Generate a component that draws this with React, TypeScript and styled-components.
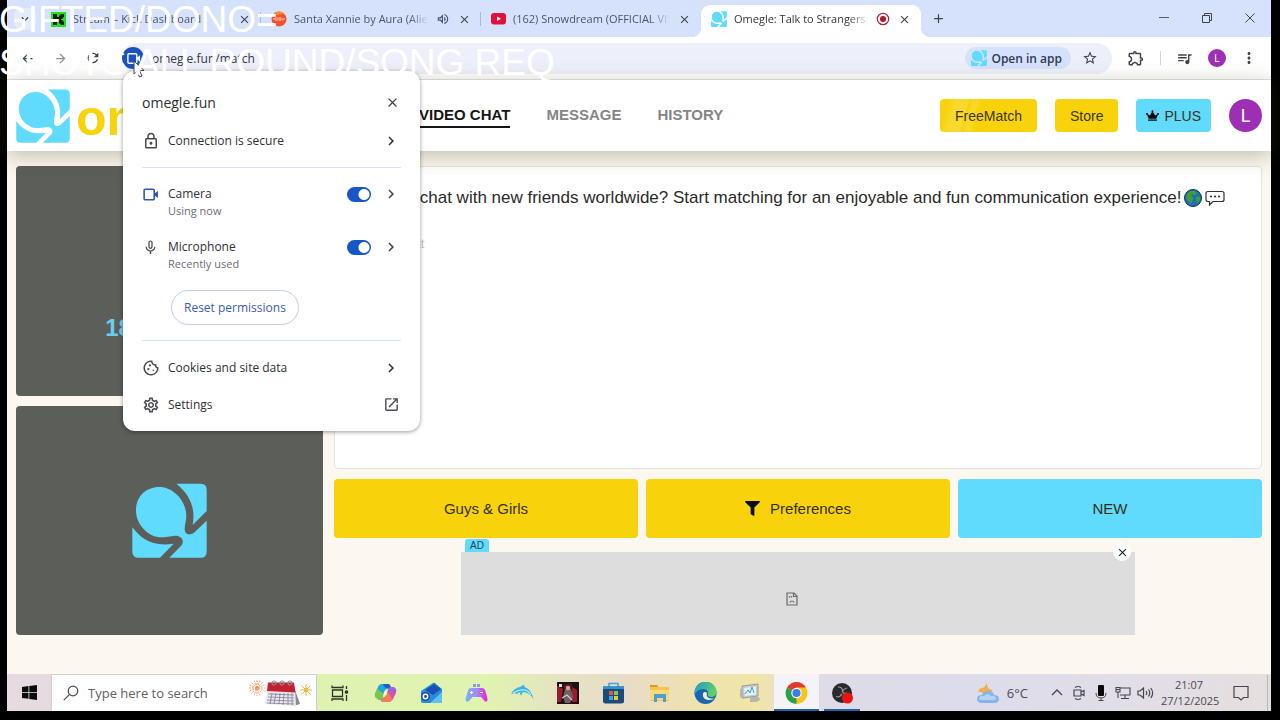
import React from "react";
import styled, { createGlobalStyle, css } from "styled-components";
import {
  MdOutlineLock, MdChevronRight, MdMicNone, MdOutlineCookie, MdOutlineSettings, MdOpenInNew,
  MdStarOutline, MdOutlineExtension, MdQueueMusic, MdMoreVert, MdClose, MdArrowBack, MdArrowForward,
  MdRefresh, MdOutlineVolumeUp, MdKeyboardArrowDown, MdAdd,
} from "react-icons/md";
import { FaCrown, FaFilter } from "react-icons/fa";

const ui = '"Open Sans", "Noto Sans", sans-serif';
const web = '"Liberation Sans", Arial, sans-serif';
const cyan = "#61dbfd";
const yellow = "#f8d30b";

const GlobalStyle = createGlobalStyle`
  *, *::before, *::after { box-sizing: border-box; }
  body { margin: 0; background: #000; }
  button, input { font: inherit; color: inherit; margin: 0; padding: 0; border: 0; background: none; }
  button { cursor: pointer; display: inline-flex; align-items: center; justify-content: center; }
  a { color: inherit; text-decoration: none; }
  svg { display: block; flex: none; }
  h1, h2, p { margin: 0; font: inherit; }
`;

const Stage = styled.div`
  position: relative;
  display: flex;
  min-height: 100vh;
  padding: 0 9px 9px 7px;
  background: #000;
  overflow: hidden;
`;

const Desktop = styled.div`
  flex: 1;
  min-width: 0;
  display: flex;
  flex-direction: column;
  font-family: ${ui};
`;

/* Tab strip */

const TabStrip = styled.div`
  display: flex;
  height: 37px;
  padding-top: 5px;
  background: #d6e2fc;
`;

const TabSearch = styled.button`
  width: 22px;
  height: 22px;
  margin: 3px 5px 0 7px;
  border-radius: 8px;
  background: #e4ecfc;
  color: #2b2f36;
`;

const TabItem = styled.div<{ $active?: boolean; $divider?: boolean }>`
  position: relative;
  flex: 0 1 220px;
  min-width: 0;
  display: flex;
  align-items: center;
  gap: 7px;
  padding: 0 10px 4px 10px;
  font-size: 11px;
  font-weight: 500;
  line-height: 16px;
  color: #4b5468;
  ${(p) => p.$divider && css`
    &::before {
      content: "";
      position: absolute;
      left: -1px;
      top: 7px;
      width: 1px;
      height: 14px;
      background: #a9b9dc;
    }
  `}
  ${(p) => p.$active && css`
    color: #33363c;
    background: #fff;
    border-radius: 9px 9px 0 0;
    &::before, &::after {
      content: "";
      position: absolute;
      bottom: 0;
      width: 9px;
      height: 9px;
    }
    &::before {
      right: 100%;
      background: radial-gradient(circle at 0 0, transparent 9px, #fff 9px);
    }
    &::after {
      left: 100%;
      background: radial-gradient(circle at 100% 0, transparent 9px, #fff 9px);
    }
  `}
`;

const TabTitle = styled.span`
  flex: 1;
  min-width: 0;
  overflow: hidden;
  white-space: nowrap;
  mask-image: linear-gradient(to right, #000 calc(100% - 20px), transparent);
`;

const IconButton = styled.button<{ $size?: number }>`
  width: ${(p) => p.$size ?? 14}px;
  height: ${(p) => p.$size ?? 14}px;
  flex: none;
  color: #3f434a;
`;

const NewTab = styled(IconButton)`
  margin: 6px 0 0 10px;
`;

const WindowControls = styled.div`
  display: flex;
  gap: 29px;
  margin: 6px 14px 0 auto;
`;

/* Toolbar */

const Toolbar = styled.div`
  position: relative;
  display: flex;
  align-items: center;
  gap: 15px;
  height: 43px;
  padding: 0 14px 0 13px;
  background: #fff;
  border-bottom: 1px solid #e4e4e6;
  font-size: 12px;
`;

const NavButtons = styled.div`
  display: flex;
  gap: 19px;
  margin-right: 7px;
`;

const Omnibox = styled.div`
  flex: 1;
  min-width: 0;
  display: flex;
  align-items: center;
  height: 31px;
  padding-right: 15px;
  border-radius: 16px;
  background: #edf0fa;
`;

const SiteChip = styled.button`
  width: 22px;
  height: 22px;
  border-radius: 50%;
  background: #1a53c0;
  color: #fff;
`;

const Address = styled.input`
  flex: 1;
  min-width: 0;
  margin-left: 8px;
  outline: 0;
  color: #33373d;
`;

const OpenInApp = styled.button`
  gap: 4px;
  height: 22px;
  margin-right: 12px;
  padding: 0 9px 0 6px;
  border-radius: 11px;
  background: #d6e2fb;
  font-size: 12px;
  font-weight: 600;
  color: #2c3b58;
`;

const ToolbarDivider = styled.span`
  width: 1px;
  height: 14px;
  background: #c9d5ee;
`;

const Avatar = styled.button<{ $size: number }>`
  width: ${(p) => p.$size}px;
  height: ${(p) => p.$size}px;
  flex: none;
  border-radius: 50%;
  background: #9c2fb3;
  color: #fff;
  font-family: Roboto, sans-serif;
  font-size: ${(p) => (p.$size > 20 ? 18 : 10)}px;
`;

/* Site information popup */

const Popup = styled.section`
  position: absolute;
  z-index: 3;
  top: 34px;
  left: 116px;
  width: 297px;
  padding: 11px 19px 8px;
  border-radius: 12px;
  background: #fff;
  box-shadow: 0 1px 4px rgba(0, 0, 0, 0.4);
  color: #2e3034;
  font-size: 12px;
  font-weight: 500;
`;

const PopupHeader = styled.header`
  display: flex;
  align-items: center;
  justify-content: space-between;
  height: 40px;
  padding-right: 1px;
  font-size: 14px;
`;

const PopupRow = styled.button`
  display: flex;
  width: 100%;
  height: 37px;
  padding-right: 1px;
  text-align: left;
`;

const RowLabel = styled.span`
  flex: 1;
  margin-left: 8px;
`;

const Rule = styled.hr<{ $before: number; $after: number }>`
  height: 1px;
  margin: ${(p) => p.$before}px 0 ${(p) => p.$after}px;
  border: 0;
  background: #d9e2f5;
`;

const Permission = styled.div`
  display: grid;
  grid-template-columns: 18px 1fr 27px 18px;
  column-gap: 8px;
  align-items: center;
  height: 53px;
  padding: 17px 1px 2px 0;
  line-height: 18px;
`;

const PermissionState = styled.span`
  grid-column: 2;
  font-size: 11px;
  font-weight: 400;
  line-height: 16px;
  color: #6b6e74;
`;

const Toggle = styled.input`
  appearance: none;
  width: 24px;
  height: 15px;
  border-radius: 8px;
  background: radial-gradient(circle at 17px 50%, #fff 5px, #1656c5 6px);
`;

const ResetButton = styled.button`
  height: 35px;
  margin: 16px 0 0 29px;
  padding: 0 12px;
  border: 1px solid #c2cdec;
  border-radius: 18px;
  color: #3c5cb6;
`;

const Cursor = styled.svg`
  position: absolute;
  z-index: 4;
  top: 23px;
  left: 126px;
`;

/* Site */

const SiteHeader = styled.header`
  position: relative;
  z-index: 1;
  display: flex;
  align-items: center;
  height: 71px;
  padding: 0 9px;
  background: #fff;
  box-shadow: 0 4px 20px rgba(60, 60, 20, 0.32);
  font-family: ${web};
`;

const Brand = styled.a`
  display: flex;
  align-items: center;
  gap: 6px;
  width: 403px;
  height: 71px;
  overflow: hidden;
`;

const BrandName = styled.span`
  padding-top: 4px;
  color: ${yellow};
  font-size: 50px;
  font-weight: 700;
  line-height: 56px;
`;

const SiteNav = styled.nav`
  display: flex;
  gap: 36px;
  font-size: 15px;
  font-weight: 700;
  line-height: 22px;
`;

const NavLink = styled.a<{ $current?: boolean }>`
  color: ${(p) => (p.$current ? "#161616" : "#858585")};
  border-bottom: 2px solid ${(p) => (p.$current ? "#161616" : "transparent")};
`;

const Actions = styled.div`
  display: flex;
  gap: 18px;
  margin-left: auto;
`;

const ActionButton = styled.button<{ $tone: string; $shine?: boolean }>`
  gap: 5px;
  height: 33px;
  padding: 0 ${(p) => (p.$tone === cyan ? 10 : 15)}px;
  border-radius: 4px;
  background: ${(p) => p.$shine
    ? `linear-gradient(105deg, ${p.$tone} 8%, #fad92e 16%, #fad92e 26%, ${p.$tone} 29%, #f9d829 32%, #f9d829 36%, ${p.$tone} 39%)`
    : p.$tone};
  font-size: 14px;
  color: #3b3514;
`;

const Main = styled.main`
  flex: 1;
  display: grid;
  grid-template-columns: minmax(0, 307fr) minmax(0, 928fr);
  gap: 11px;
  padding: 15px 9px 39px;
  background: #fcf7ef;
  font-family: ${web};
`;

const Videos = styled.div`
  display: grid;
  grid-template-rows: 1fr 1fr;
  gap: 10px;
`;

const VideoPanel = styled.div`
  display: flex;
  align-items: center;
  justify-content: center;
  min-height: 160px;
  border-radius: 4px;
  background: #5c5e5a;
`;

const AgeNote = styled.p`
  margin-top: 94px;
  font-size: 24px;
  font-weight: 700;
  line-height: 28px;
  color: #68cdf2;
`;

const Conversation = styled.div`
  display: flex;
  flex-direction: column;
`;

const ChatLog = styled.div`
  flex: 1;
  padding: 20px 12px;
  border: 1px solid #e2e2e2;
  border-radius: 4px;
  background: #fff;
`;

const Welcome = styled.p`
  display: flex;
  align-items: center;
  gap: 3px;
  font-size: 17px;
  line-height: 22px;
  white-space: nowrap;
  color: #2a2a2a;
`;

const Hint = styled.p`
  margin-top: 26px;
  font-size: 13px;
  line-height: 18px;
  color: #c4c4c4;
`;

const Controls = styled.div`
  display: grid;
  grid-template-columns: repeat(3, 1fr);
  gap: 8px;
  margin-top: 10px;
`;

const ControlButton = styled.button<{ $tone: string }>`
  gap: 10px;
  height: 59px;
  border-radius: 4px;
  background: ${(p) => p.$tone};
  font-size: 15px;
  color: #33300f;
`;

const AdSlot = styled.aside`
  position: relative;
  display: flex;
  align-items: center;
  justify-content: center;
  align-self: center;
  width: 674px;
  max-width: 100%;
  height: 83px;
  margin-top: 14px;
  padding: 10px 12px 0 0;
  background: #dddddd;
`;

const AdTag = styled.span`
  position: absolute;
  left: 4px;
  bottom: 100%;
  width: 24px;
  border-radius: 3px 3px 0 0;
  background: ${cyan};
  font-size: 10px;
  line-height: 13px;
  text-align: center;
  color: #1e4652;
`;

const AdClose = styled.button`
  position: absolute;
  top: -9px;
  right: 4px;
  width: 18px;
  height: 18px;
  border-radius: 50%;
  background: #fff;
  color: #222;
`;

/* Taskbar */

const Taskbar = styled.footer`
  display: flex;
  height: 37px;
  background: linear-gradient(90deg, #e6dbe0 0, #e6dbe0 44px, #dff2b2 310px, #e0f3b0 480px, #e6e2c4 560px, #e8dcc8 620px, #efe2b0 690px, #f0e6a6 750px, #dfdbe6 800px, #dddcec 950px, #e3dee6 1150px, #e6dede 100%);
`;

const StartButton = styled.button`
  width: 44px;
`;

const SearchBox = styled.label`
  display: flex;
  align-items: center;
  gap: 9px;
  width: 266px;
  padding: 0 2px 0 11px;
  border: 1px solid #cfcfcf;
  border-bottom: 0;
  background: #fff;
  color: #5b5b5b;
  font-size: 13px;
`;

const SearchInput = styled.input`
  flex: 1;
  min-width: 0;
  outline: 0;
  &::placeholder { color: #5f5f5f; opacity: 1; }
`;

const Apps = styled.div`
  display: grid;
  grid-template-columns: repeat(12, 1fr);
  width: 548px;
`;

const AppButton = styled.button<{ $state?: "open" | "focused" }>`
  height: 37px;
  background: ${(p) => (p.$state === "focused" ? "#f5f3f7" : "none")};
  ${(p) => p.$state && css`
    background-image: linear-gradient(#1f63ad, #1f63ad);
    background-repeat: no-repeat;
    background-position: center bottom;
    background-size: ${p.$state === "focused" ? "100%" : "36px"} 2px;
  `}
`;

const Tray = styled.div`
  display: flex;
  align-items: center;
  margin-left: auto;
  padding-right: 3px;
  color: #4a4a50;
`;

const Weather = styled.button`
  gap: 7px;
  margin-right: 20px;
  font-size: 13px;
`;

const TrayIcons = styled.div`
  display: flex;
  align-items: center;
  gap: 6px;
`;

const Clock = styled.time`
  width: 56px;
  margin: 0 16px 0 7px;
  font-size: 11px;
  line-height: 16px;
  text-align: center;
  white-space: nowrap;
`;

const ShowDesktop = styled.button`
  width: 1px;
  height: 36px;
  margin-left: 18px;
  background: #bdb8b8;
`;

const Caption = styled.div`
  position: absolute;
  z-index: 5;
  top: -2px;
  left: -1px;
  pointer-events: none;
  font-family: ${web};
  font-size: 37px;
  line-height: 43px;
  white-space: pre;
  color: #fff;
`;

function BrandMark({ size }: { size: number }) {
  return (
    <svg width={size} height={size} viewBox="0 0 225 225" fill={cyan} aria-hidden="true">
      <path d="M12 83C12 40 42 12 82 12C125 12 163 55 163 98C163 112 158 125 158 138C158 150 165 156 176 154Q181 153 186 149L224 113V206Q224 224 206 224H112L149 187C158 172 148 158 130 158C115 160 100 163 88 163C50 163 12 125 12 83Z" />
      <path d="M133 2H206Q224 2 224 20V84L182 126C190 80 178 38 133 2Z" />
      <path d="M1 133C28 168 60 192 125 182L84 224H20Q1 224 1 206Z" />
    </svg>
  );
}

function CameraGlyph({ size }: { size: number }) {
  return (
    <svg width={size} height={size} viewBox="0 0 16 16" aria-hidden="true">
      <rect x="2" y="3" width="9.5" height="10" rx="1" fill="none" stroke="currentColor" strokeWidth="1.5" />
      <path d="M11.5 7.2L15 4.6V11.4L11.5 8.8Z" fill="currentColor" />
    </svg>
  );
}

function KickIcon() {
  return (
    <svg width="15" height="15" viewBox="0 0 15 15" aria-hidden="true">
      <rect width="15" height="15" fill="#1ee31b" />
      <path d="M2 2H6V5H8V3.5H9.5V2H13V5.5H11.5V7H10V8H11.500V9.500H13V13H9.500V11.500H8V10H6V13H2Z" fill="#0a1a08" />
    </svg>
  );
}

function SunoIcon() {
  return (
    <svg width="16" height="16" viewBox="0 0 16 16" aria-hidden="true">
      <circle cx="8" cy="8" r="7.500" fill="#f4512c" />
      <path d="M1 6A7.500 7.500 0 0 1 14 3.500Q8 2 1 6Z" fill="#f98b2d" />
      <path d="M3 9V7M5 10V6M7 9.500V6.500M9 10V6M11 9.500V7M13 9V7" stroke="#ffd9c4" strokeWidth="1" />
    </svg>
  );
}

function YouTubeIcon() {
  return (
    <svg width="15" height="12" viewBox="0 0 15 12" aria-hidden="true">
      <rect width="15" height="11.500" rx="3" fill="#e3103b" />
      <path d="M6 3.500L10 5.800L6 8Z" fill="#fff" />
    </svg>
  );
}

function RecordIcon() {
  return (
    <svg width="14" height="14" viewBox="0 0 14 14" aria-hidden="true">
      <circle cx="7" cy="7" r="5.700" fill="none" stroke="#b3243a" strokeWidth="1.200" />
      <circle cx="7" cy="7" r="3" fill="#b3142c" />
    </svg>
  );
}

function GlobeEmoji() {
  return (
    <svg width="18" height="18" viewBox="0 0 18 18" role="img" aria-label="globe">
      <circle cx="9" cy="9" r="8.500" fill="#1d6fb8" stroke="#15304a" />
      <path d="M5 2.500L11 1.500L13 4L11.500 6L8.500 5.500L7 7L9.500 8.500L9 11L6.500 15L4.500 12L2 9.500L3 5Z" fill="#3f9b3c" />
      <path d="M12 8L16 7.500L16 11L13.500 14L12 12Z" fill="#3f9b3c" />
    </svg>
  );
}

function SpeechEmoji() {
  return (
    <svg width="20" height="18" viewBox="0 0 20 18" role="img" aria-label="speech balloon">
      <path d="M3 2.500H17Q19 2.500 19 4.500V10.500Q19 12.500 17 12.500H8L4.500 16V12.500H3Q1 12.500 1 10.500V4.500Q1 2.500 3 2.500Z" fill="#fff" stroke="#333" strokeWidth="1.200" />
      <circle cx="6" cy="7.500" r="1.100" fill="#333" />
      <circle cx="10" cy="7.500" r="1.100" fill="#333" />
      <circle cx="14" cy="7.500" r="1.100" fill="#333" />
    </svg>
  );
}

function BrokenFileIcon() {
  return (
    <svg width="12" height="14" viewBox="0 0 12 14" fill="none" stroke="#6a6a6a" strokeWidth="1.200" aria-hidden="true">
      <path d="M1 1H8L11 4V13H1Z" />
      <path d="M7.500 1V4.500H11M3.500 4V5.500M5.500 4V5.500M3.800 10.500Q6 7.500 8.200 10.500" />
    </svg>
  );
}

function CalendarArt() {
  return (
    <svg width="66" height="28" viewBox="0 0 66 28" aria-hidden="true">
      <g stroke="#f0844a" strokeWidth="0.800" strokeDasharray="2 1">
        <path d="M9 1V17M1 9H17M3.500 3.500L14.500 14.500M14.500 3.500L3.500 14.500M6 1.500L12 16.500M12 1.500L6 16.500M1.500 6L16.500 12M1.500 12L16.500 6" />
      </g>
      <g stroke="#f2b53c" strokeWidth="1">
        <path d="M58 5V17M52 11H64M53.500 6.500L62.500 15.500M62.500 6.500L53.500 15.500" />
        <circle cx="58" cy="11" r="1.500" fill="#f2b53c" />
      </g>
      <path d="M46 8L52 25L45 27Z" fill="#8d8890" />
      <path d="M20 9H47L48 27L17 25Z" fill="#e9e7ef" />
      <path d="M20 3.500H46L47.500 13.500L19 12Z" fill="#c4202e" />
      <path d="M20 15L46 16M20 18L46 19M19 21L46 22M19 24L46 25M24 14L22 25M28 14L26 25M32 14L31 25M36 14L35 26M40 14L40 26M44 14L44 26" stroke="#77748a" strokeWidth="0.700" />
      <g fill="none" stroke="#8a8a92" strokeWidth="1.200">
        <circle cx="26" cy="4" r="2" /><circle cx="34" cy="4" r="2" /><circle cx="42" cy="4" r="2" />
      </g>
    </svg>
  );
}

const taskIcons: { name: string; state?: "open" | "focused"; art: React.ReactNode }[] = [
  {
    name: "Task view",
    art: (
      <g fill="none" stroke="#2e3526" strokeWidth="1.300">
        <path d="M4 3.500V5.500H15V3.500M4.500 8H14.500V14.500H4.500ZM4 19V17H15V19M18.500 4V7M18.500 13V19" />
        <circle cx="18.500" cy="10" r="1.200" fill="#2e3526" />
      </g>
    ),
  },
  {
    name: "Copilot",
    art: (
      <>
        <path d="M8 2H14Q16 2 16.500 4L17.500 7H13Q11 7 10 10L8 17Q7 19 4.500 17.500Q0 15 1 12L4 5Q5 2 8 2Z" fill="#1fa7d8" />
        <path d="M1 12L3 7L9 11L8 17Q7 18 5 17.500Q0 16 1 12Z" fill="#7cc648" />
        <path d="M9 2H14Q16 2 17 6H12Q9 4 9 2Z" fill="#2257c9" />
        <path d="M14 20H9Q7 20 7 18L8 16Q11 16 12 13L14.500 6Q19 4 21 6Q23 8 22 11L19 17Q17.500 20 14 20Z" fill="#d654a8" />
        <path d="M8 16Q11 16 12 13L13 10Q17 13 18 18Q16 20 14 20H9Q7 20 8 16Z" fill="#f77d52" />
        <path d="M15 6Q19 4 21 6Q23 8 22 10H14Z" fill="#9a63d8" />
        <path d="M10 10.500L13.500 9L12.500 13L9.500 14Z" fill="#f0f6d8" />
      </>
    ),
  },
  {
    name: "Camera",
    art: (
      <>
        <path d="M1 9L13 1Q15 0 16 2L22 7V19Q22 21 20 21H3Q1 21 1 19Z" fill="#2a8bdc" />
        <path d="M5 8L14 2L21 7L13 13Z" fill="#1b53b4" />
        <path d="M10 21L22 10V19Q22 21 20 21Z" fill="#5fc0f5" />
        <circle cx="5.500" cy="14.500" r="4.500" fill="#1d4fa8" />
        <circle cx="5.500" cy="14.500" r="2.200" fill="none" stroke="#fff" strokeWidth="1.500" />
      </>
    ),
  },
  {
    name: "Game controller",
    art: (
      <>
        <defs>
          <linearGradient id="pad"><stop offset="0" stopColor="#74b4f0" /><stop offset="0.500" stopColor="#a98af0" /><stop offset="1" stopColor="#e61fd8" /></linearGradient>
        </defs>
        <path d="M6 6H17Q20 6 21 11L22.500 17Q22.500 21 19.500 19L16 15H7.500L4 19Q.5 21 .5 17L2.500 10Q3.500 6 6 6Z" fill="url(#pad)" />
        <path d="M8 2H11V5H8ZM12 2H15V5H12ZM10 6H13V9H10Z" fill="#8f96ef" />
        <path d="M5 10.500H8M6.500 9V12M15 10.500H18" stroke="#fff" strokeWidth="1.100" />
      </>
    ),
  },
  {
    name: "Dolphin",
    art: (
      <>
        <path d="M0 12Q3 6 9 5L13 2.500L13.500 5Q20 7 22.500 17Q18 10 12 10Q7 10 6 12Q4 10.500 0 12Z" fill="#37b5e6" />
        <path d="M2 11Q8 7 14 8Q18 9 20 13" fill="none" stroke="#b6ecf5" strokeWidth="1.200" />
        <path d="M12 10L10 13.500L8.500 10.500Z" fill="#37b5e6" />
      </>
    ),
  },
  {
    name: "Game",
    art: (
      <>
        <rect y="0" width="22" height="22" fill="#1c1216" />
        <path d="M0 4L6 7L4 20H0ZM15 5L20 8V20H15Z" fill="#9d1c2c" />
        <path d="M6 3L15 2L14 8H8Z" fill="#5e1b22" />
        <path d="M8 7H14L16 15L13 21H8L6 15Z" fill="#6f6163" />
        <circle cx="11" cy="6" r="2.200" fill="#d2a495" />
        <path d="M5 16L10 13L15 18" stroke="#d6c7c7" strokeWidth="1.200" fill="none" />
        <rect x="2" y="2" width="3" height="3" fill="#dcdcdc" />
      </>
    ),
  },
  {
    name: "Store",
    art: (
      <>
        <path d="M7 5V1.500H16V5" fill="none" stroke="#3ea6e0" strokeWidth="1.600" />
        <path d="M1 4.500H22V19Q22 21.500 19.500 21.500H3.500Q1 21.500 1 19Z" fill="#1d4a7c" />
        <path d="M1 4.500H22V7H1Z" fill="#2f93d3" />
        <path d="M7 9H11V13H7Z" fill="#e8553a" /><path d="M12 9H16V13H12Z" fill="#8cc63f" />
        <path d="M7 14H11V18H7Z" fill="#35a9e8" /><path d="M12 14H16V18H12Z" fill="#fbc12e" />
      </>
    ),
  },
  {
    name: "File Explorer",
    art: (
      <>
        <path d="M2 3H9L11 5H21V19H2Z" fill="#f5c64f" />
        <path d="M2 3H9L10 5H2Z" fill="#d99a22" />
        <path d="M2 8H21V18H2Z" fill="#fcd978" />
        <path d="M6 12H18V20H15V16H9V20H6Z" fill="#4f9dd2" />
      </>
    ),
  },
  {
    name: "Edge",
    art: (
      <>
        <defs>
          <linearGradient id="edge" x1="0" y1="0" x2="1" y2="0.400"><stop offset="0" stopColor="#1f93d6" /><stop offset="1" stopColor="#5fd267" /></linearGradient>
        </defs>
        <circle cx="11.500" cy="11" r="11" fill="#1767ae" />
        <path d="M.5 11A11 11 0 0 1 22.500 10Q22.500 15 17 15Q13 15 14 12Q14.500 7 9 7Q3 7 .5 13Z" fill="url(#edge)" />
        <path d="M9 11Q8 17 14 18Q18 18.500 21 16Q16 17.500 13.500 15Q12 13.500 13 11.500Q12 9 9 11Z" fill="#f3ecd0" />
      </>
    ),
  },
  {
    name: "System monitor",
    art: (
      <>
        <path d="M3 4L19 2V14L4 16Z" fill="#c9c9c9" stroke="#8c8c8c" strokeWidth="0.800" />
        <path d="M5 6L17 4.500V12.500L6 14Z" fill="#e2f4f8" />
        <path d="M6 12L9 8L11 11L13 5L15 11" fill="none" stroke="#3fa3bb" />
        <path d="M11 15H20L21 18L17 20H11ZM1 7L4 6V17L1 15Z" fill="#b9b4ac" />
      </>
    ),
  },
  {
    name: "Chrome",
    state: "focused",
    art: (
      <>
        <path d="M11.500 11L2 5.500A11 11 0 0 1 21 5.500Z" fill="#df3b2f" />
        <path d="M11.500 11L2 5.500A11 11 0 0 0 11.500 22L15 13Z" fill="#2ca14c" />
        <path d="M11.500 11L11.500 22A11 11 0 0 0 21 5.500H11.500Z" fill="#f9c518" />
        <circle cx="11.500" cy="11" r="5.200" fill="#fff" />
        <circle cx="11.500" cy="11" r="4.100" fill="#3b7de9" />
      </>
    ),
  },
  {
    name: "OBS Studio",
    state: "open",
    art: (
      <>
        <circle cx="11" cy="11" r="10" fill="#2a2a2e" />
        <path d="M7 5Q12 5 11.500 9.500Q12 12 16 11M5 14.500Q9 16 11 11.500M16 6Q12 7 11.500 10" fill="none" stroke="#97979b" strokeWidth="1.200" />
        <circle cx="16.500" cy="16" r="5.500" fill="#ee1111" />
      </>
    ),
  },
];

const tabs = [
  { title: "Stream – Kick Dashboard", icon: <KickIcon /> },
  { title: "Santa Xannie by Aura (Alien", icon: <SunoIcon />, status: <MdOutlineVolumeUp size={14} /> },
  { title: "(162) Snowdream (OFFICIAL VIS", icon: <YouTubeIcon /> },
  { title: "Omegle: Talk to Strangers w", icon: <BrandMark size={16} />, status: <RecordIcon />, active: true },
];

function BrowserTabs() {
  return (
    <TabStrip>
      <TabSearch aria-label="Search tabs"><MdKeyboardArrowDown size={14} /></TabSearch>
      {tabs.map((tab, i) => (
        <TabItem key={tab.title} $active={tab.active} $divider={i === 1 || i === 2}>
          {tab.icon}
          <TabTitle>{tab.title}</TabTitle>
          {tab.status}
          <IconButton aria-label="Close tab"><MdClose size={13} /></IconButton>
        </TabItem>
      ))}
      <NewTab aria-label="New tab"><MdAdd size={15} /></NewTab>
      <WindowControls>
        <IconButton aria-label="Minimise">
          <svg width="10" height="10" viewBox="0 0 10 10"><path d="M0 4.500H10" stroke="#555c6b" /></svg>
        </IconButton>
        <IconButton aria-label="Restore">
          <svg width="10" height="10" viewBox="0 0 10 10" fill="none" stroke="#3f434a"><path d="M.5 2.500H7.500V9.500H.5ZM2.500 2.500V.5H9.500V7.500H7.500" /></svg>
        </IconButton>
        <IconButton aria-label="Close window">
          <svg width="10" height="10" viewBox="0 0 10 10" stroke="#3f434a"><path d="M.5 .5L9.500 9.500M9.500 .5L.5 9.500" /></svg>
        </IconButton>
      </WindowControls>
    </TabStrip>
  );
}

function PermissionRow({ icon, id, label, state }: { icon: React.ReactNode; id: string; label: string; state: string }) {
  return (
    <Permission>
      {icon}
      <label htmlFor={id}>{label}</label>
      <Toggle id={id} type="checkbox" role="switch" defaultChecked />
      <IconButton aria-label={`${label} details`} $size={18}><MdChevronRight size={18} /></IconButton>
      <PermissionState>{state}</PermissionState>
    </Permission>
  );
}

function SiteInfo() {
  return (
    <Popup aria-label="Site information">
      <PopupHeader>
        <h2>omegle.fun</h2>
        <IconButton aria-label="Close" $size={16}><MdClose size={15} /></IconButton>
      </PopupHeader>
      <PopupRow>
        <MdOutlineLock size={18} color="#484b50" />
        <RowLabel>Connection is secure</RowLabel>
        <MdChevronRight size={18} />
      </PopupRow>
      <Rule $before={8} $after={0} />
      <PermissionRow id="camera" label="Camera" state="Using now" icon={<CameraIcon />} />
      <PermissionRow id="microphone" label="Microphone" state="Recently used" icon={<MdMicNone size={17} color="#484b50" />} />
      <ResetButton>Reset permissions</ResetButton>
      <Rule $before={15} $after={8} />
      <PopupRow>
        <MdOutlineCookie size={18} color="#484b50" />
        <RowLabel>Cookies and site data</RowLabel>
        <MdChevronRight size={18} />
      </PopupRow>
      <PopupRow>
        <MdOutlineSettings size={18} color="#484b50" />
        <RowLabel>Settings</RowLabel>
        <MdOpenInNew size={17} color="#484b50" />
      </PopupRow>
    </Popup>
  );
}

const CameraTint = styled.span`
  color: #2f55b8;
`;

function CameraIcon() {
  return <CameraTint><CameraGlyph size={17} /></CameraTint>;
}

function BrowserToolbar() {
  return (
    <Toolbar>
      <NavButtons>
        <IconButton aria-label="Back"><MdArrowBack size={15} /></IconButton>
        <IconButton aria-label="Forward"><MdArrowForward size={15} color="#8d9095" /></IconButton>
        <IconButton aria-label="Reload"><MdRefresh size={16} /></IconButton>
      </NavButtons>
      <Omnibox>
        <SiteChip aria-label="View site information"><CameraGlyph size={15} /></SiteChip>
        <Address aria-label="Address" defaultValue="omegle.fun/match" />
        <OpenInApp><BrandMark size={16} />Open in app</OpenInApp>
        <IconButton aria-label="Bookmark"><MdStarOutline size={16} /></IconButton>
      </Omnibox>
      <IconButton aria-label="Extensions" $size={18}><MdOutlineExtension size={18} /></IconButton>
      <ToolbarDivider />
      <IconButton aria-label="Media" $size={17}><MdQueueMusic size={17} /></IconButton>
      <Avatar $size={18} aria-label="Profile">L</Avatar>
      <IconButton aria-label="Menu" $size={16}><MdMoreVert size={18} /></IconButton>
      <SiteInfo />
      <Cursor width="12" height="18" viewBox="0 0 12 18" aria-hidden="true">
        <path d="M1 1V14L4 11.500L6.500 17L9 16L6.500 10.500H11Z" fill="#fff" stroke="#444" strokeWidth="1" />
      </Cursor>
    </Toolbar>
  );
}

function Site() {
  return (
    <>
      <SiteHeader>
        <Brand href="#"><BrandMark size={54} /><BrandName>omegle</BrandName></Brand>
        <SiteNav>
          <NavLink href="#" $current>VIDEO CHAT</NavLink>
          <NavLink href="#">MESSAGE</NavLink>
          <NavLink href="#">HISTORY</NavLink>
        </SiteNav>
        <Actions>
          <ActionButton $tone={yellow} $shine>FreeMatch</ActionButton>
          <ActionButton $tone={yellow}>Store</ActionButton>
          <ActionButton $tone={cyan}><FaCrown size={13} color="#0c0c0c" />PLUS</ActionButton>
          <Avatar $size={33} aria-label="Account">L</Avatar>
        </Actions>
      </SiteHeader>
      <Main>
        <Videos>
          <VideoPanel><AgeNote>18+ Rooms</AgeNote></VideoPanel>
          <VideoPanel><BrandMark size={75} /></VideoPanel>
        </Videos>
        <Conversation>
          <ChatLog>
            <Welcome>
              Ready to chat with new friends worldwide? Start matching for an enjoyable and fun communication experience!
              <GlobeEmoji /><SpeechEmoji />
            </Welcome>
            <Hint>Start the chat</Hint>
          </ChatLog>
          <Controls>
            <ControlButton $tone={yellow}>Guys &amp; Girls</ControlButton>
            <ControlButton $tone={yellow}><FaFilter size={15} color="#0c0c0c" />Preferences</ControlButton>
            <ControlButton $tone={cyan}>NEW</ControlButton>
          </Controls>
          <AdSlot>
            <AdTag>AD</AdTag>
            <BrokenFileIcon />
            <AdClose aria-label="Close ad"><MdClose size={13} /></AdClose>
          </AdSlot>
        </Conversation>
      </Main>
    </>
  );
}

function WindowsTaskbar() {
  return (
    <Taskbar>
      <StartButton aria-label="Start">
        <svg width="15" height="15" viewBox="0 0 15 15" fill="#0c0c0c"><path d="M0 2L6.500 1.100V7H0ZM7.300 1L15 0V7H7.300ZM0 7.800H6.500V13.800L0 12.900ZM7.300 7.800H15V15L7.300 13.900Z" /></svg>
      </StartButton>
      <SearchBox>
        <svg width="16" height="16" viewBox="0 0 16 16" fill="none" stroke="#4c4c4c" strokeWidth="1.200"><circle cx="10" cy="6" r="4.800" /><path d="M6.600 9.400L.8 15.200" /></svg>
        <SearchInput aria-label="Search" placeholder="Type here to search" />
        <CalendarArt />
      </SearchBox>
      <Apps>
        {taskIcons.map((app) => (
          <AppButton key={app.name} $state={app.state} aria-label={app.name}>
            <svg width="23" height="22" viewBox="0 0 23 22">{app.art}</svg>
          </AppButton>
        ))}
      </Apps>
      <Tray>
        <Weather>
          <svg width="24" height="22" viewBox="0 0 24 22" aria-hidden="true">
            <path d="M11 0Q10 7 17 8Q13 13 7 11Q3 9 2 10Q3 6 6 6Q10 5 11 0Z" fill="#efb04c" />
            <path d="M6 21Q1 21 1 17Q1 13 6 13Q8 8 13 9Q17 9 18 13Q23 13 23 17Q23 21 18 21Z" fill="#86b3ea" />
            <path d="M6 18Q3 18 3 16Q4 13 8 14Q11 10 15 14Q19 13 20 16Q20 18 17 18Z" fill="#b4d3f6" />
          </svg>
          6°C
        </Weather>
        <TrayIcons>
          <IconButton aria-label="Hidden icons" $size={17}>
            <svg width="12" height="7" viewBox="0 0 12 7" fill="none" stroke="#46464c" strokeWidth="1.300"><path d="M1 6L6 1L11 6" /></svg>
          </IconButton>
          <IconButton aria-label="Meet now" $size={16}>
            <svg width="12" height="16" viewBox="0 0 12 16" fill="none" stroke="#46464c" strokeWidth="1.200"><path d="M1 5H8V11H1ZM8 7L11 5.500V10.500L8 9M2 2.500Q5 .5 8 2.500M2 13.500Q5 15.500 8 13.500" /></svg>
          </IconButton>
          <IconButton aria-label="Microphone in use" $size={16}>
            <svg width="12" height="16" viewBox="0 0 12 16"><rect x="3" y="0" width="6" height="11" rx="1" fill="#0a0a0a" /><path d="M1 8Q1 13 6 13Q11 13 11 8M6 13V15.500M3.500 15.500H8.500" fill="none" stroke="#46464c" /></svg>
          </IconButton>
          <IconButton aria-label="Network" $size={16}>
            <svg width="16" height="14" viewBox="0 0 16 14" fill="none" stroke="#46464c" strokeWidth="1.100"><path d="M5 2H15V9H5M10 9V12M6 12.500H14M1 1.500H5V6H1ZM3 6V12M1 3.500H5" /></svg>
          </IconButton>
          <IconButton aria-label="Volume" $size={17}>
            <svg width="17" height="14" viewBox="0 0 17 14" fill="none" stroke="#46464c" strokeWidth="1.200"><path d="M1 5H3L6.500 2V12L3 9H1ZM9 5Q10.500 7 9 9M11.500 3.500Q14 7 11.500 10.500M13.800 2Q17.500 7 13.800 12" /></svg>
          </IconButton>
        </TrayIcons>
        <Clock>21:07<br />27/12/2025</Clock>
        <IconButton aria-label="Notifications" $size={16}>
          <svg width="16" height="16" viewBox="0 0 16 16" fill="none" stroke="#46464c" strokeWidth="1.200"><path d="M1 1.500H15V12.500H10.500L8 15L5.500 12.500H1Z" /></svg>
        </IconButton>
        <ShowDesktop aria-label="Show desktop" />
      </Tray>
    </Taskbar>
  );
}

export default function App() {
  return (
    <Stage>
      <GlobalStyle />
      <Desktop>
        <BrowserTabs />
        <BrowserToolbar />
        <Site />
        <WindowsTaskbar />
      </Desktop>
      <Caption>{"GIFTED/DONO=\nSHOTS ALL ROUND/SONG REQ"}</Caption>
    </Stage>
  );
}
